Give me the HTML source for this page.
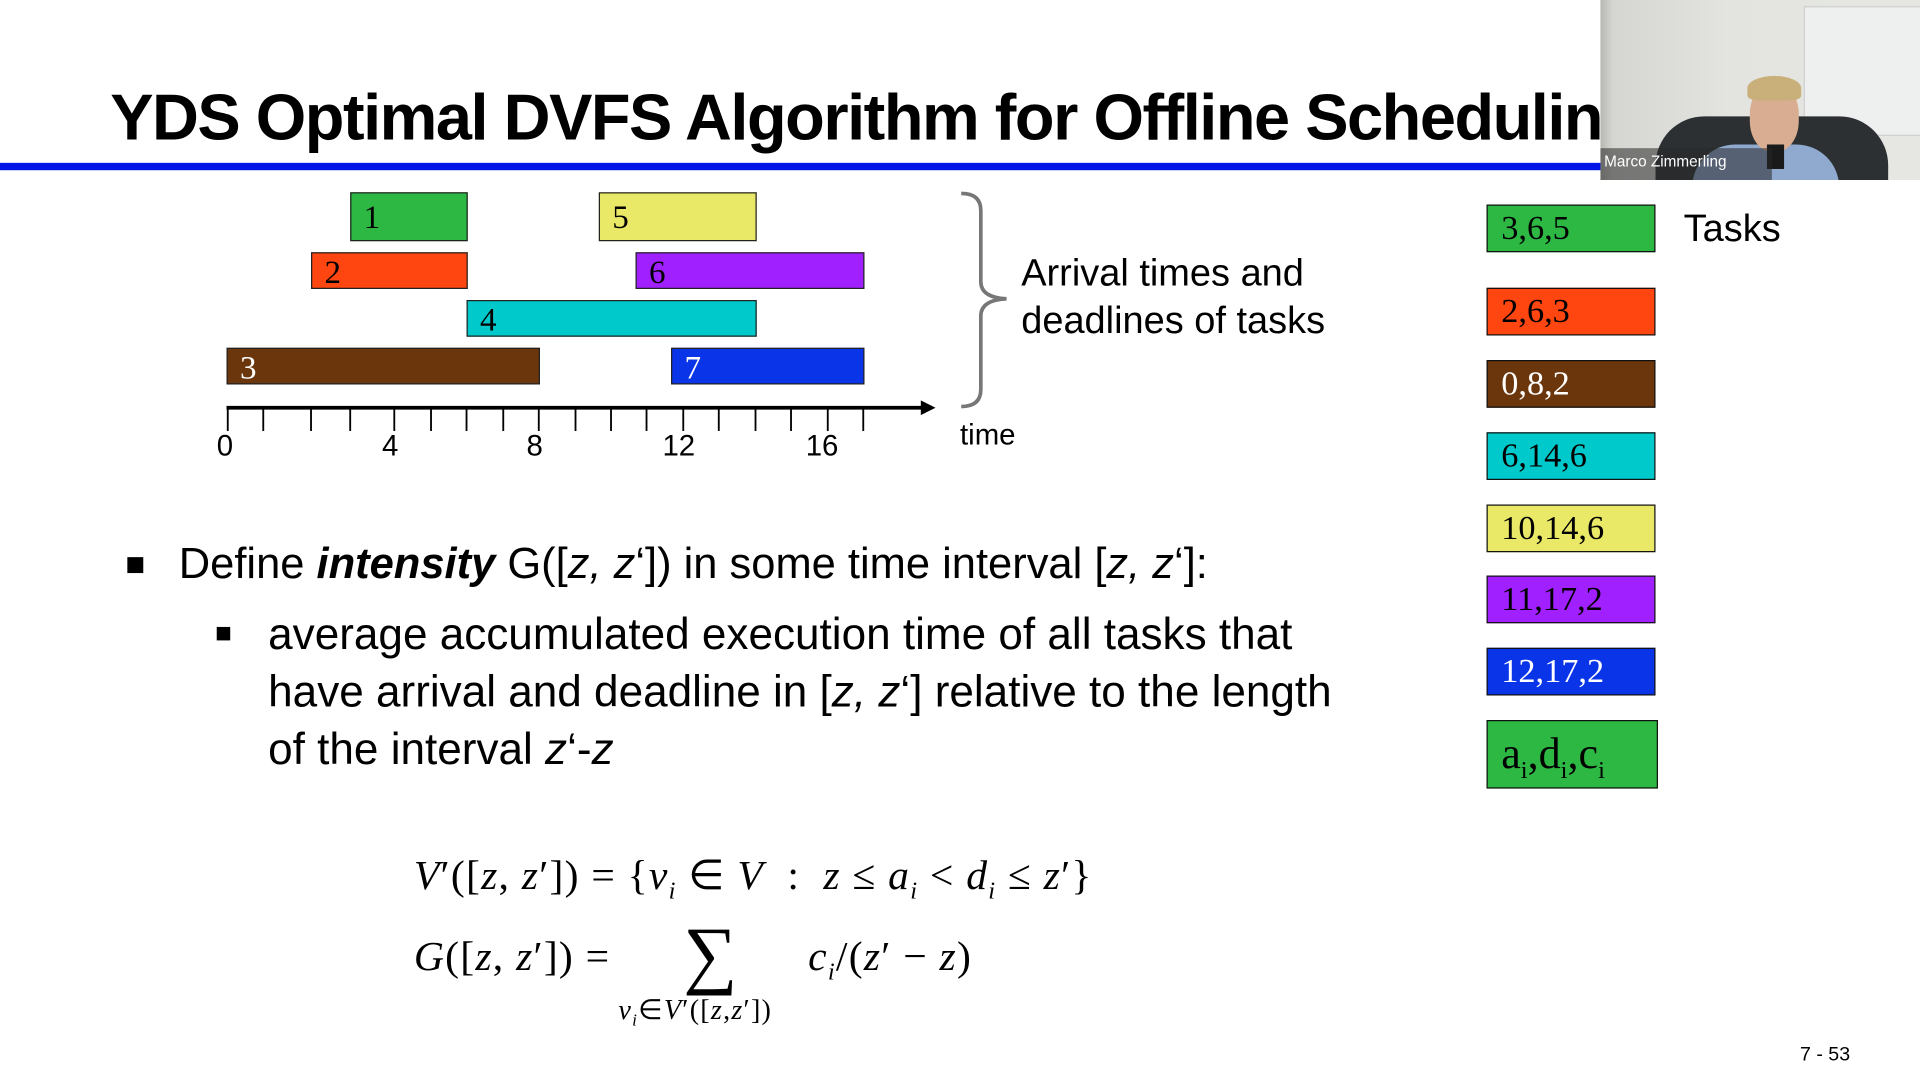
<!DOCTYPE html>
<html><head><meta charset="utf-8"><style>
html,body{margin:0;padding:0;width:1920px;height:1080px;overflow:hidden;background:#fff}
#s{position:absolute;left:0;top:0;width:1568px;height:882px;transform:scale(1.22449);transform-origin:0 0;font-family:"Liberation Sans",sans-serif;color:#000}
.a{position:absolute;white-space:nowrap}
.bar{position:absolute;border:1px solid #222;box-sizing:border-box;font-family:"Liberation Serif",serif;font-size:27px;line-height:1;padding:4px 0 0 10px}
.box{position:absolute;left:1214px;width:138px;height:39px;border:1px solid #111;box-sizing:border-box;font-family:"Liberation Serif",serif;font-size:28px;padding:4px 0 0 11px;line-height:1.1}
.m{font-family:"Liberation Serif",serif;font-size:34px;letter-spacing:1px}
.txt{font-size:36px}
</style></head><body><div id="s">
<div class="a" style="left:90px;top:66px;font-size:53px;font-weight:bold;letter-spacing:-1.2px">YDS Optimal DVFS Algorithm for Offline Scheduling</div>
<div class="a" style="left:0;top:133px;width:1310px;height:6px;background:#0016e6"></div>

<div class="bar" style="left:286px;top:157px;width:96px;height:40px;background:#2db843;padding-top:6px">1</div>
<div class="bar" style="left:489px;top:157px;width:129px;height:40px;background:#e9e867;padding-top:6px">5</div>
<div class="bar" style="left:254px;top:206px;width:128px;height:30px;background:#ff4510;padding-top:2px">2</div>
<div class="bar" style="left:519px;top:206px;width:187px;height:30px;background:#a020ff;padding-top:2px">6</div>
<div class="bar" style="left:381px;top:245px;width:237px;height:30px;background:#00c9cb;padding-top:2px;padding-left:10px">4</div>
<div class="bar" style="left:185px;top:284px;width:256px;height:30px;background:#6b360b;color:#fff;padding-top:2px">3</div>
<div class="bar" style="left:548px;top:284px;width:158px;height:30px;background:#0a34e8;color:#fff;padding-top:2px">7</div>

<svg class="a" style="left:0;top:0" width="1568" height="400">
<line x1="185" y1="333" x2="755" y2="333" stroke="#000" stroke-width="3"/>
<polygon points="764,333 752,327 752,339" fill="#000"/>
<g stroke="#000" stroke-width="1.5">
<line x1="186" y1="333" x2="186" y2="352"/><line x1="215" y1="333" x2="215" y2="352"/><line x1="254" y1="333" x2="254" y2="352"/><line x1="286" y1="333" x2="286" y2="352"/><line x1="322" y1="333" x2="322" y2="352"/><line x1="352" y1="333" x2="352" y2="352"/><line x1="381" y1="333" x2="381" y2="352"/><line x1="411" y1="333" x2="411" y2="352"/><line x1="440" y1="333" x2="440" y2="352"/><line x1="470" y1="333" x2="470" y2="352"/><line x1="499" y1="333" x2="499" y2="352"/><line x1="528" y1="333" x2="528" y2="352"/><line x1="558" y1="333" x2="558" y2="352"/><line x1="587" y1="333" x2="587" y2="352"/><line x1="617" y1="333" x2="617" y2="352"/><line x1="646" y1="333" x2="646" y2="352"/><line x1="676" y1="333" x2="676" y2="352"/><line x1="705" y1="333" x2="705" y2="352"/>
</g>
<path d="M785 158 Q801 158 801 172 L801 230 Q801 243 822 244 Q801 245 801 258 L801 318 Q801 332 785 332" fill="none" stroke="#777" stroke-width="3"/>
</svg>
<div class="a" style="left:177px;top:351px;font-size:24px">0</div>
<div class="a" style="left:312px;top:351px;font-size:24px">4</div>
<div class="a" style="left:430px;top:351px;font-size:24px">8</div>
<div class="a" style="left:541px;top:351px;font-size:24px">12</div>
<div class="a" style="left:658px;top:351px;font-size:24px">16</div>
<div class="a" style="left:784px;top:342px;font-size:24px">time</div>
<div class="a" style="left:834px;top:203px;font-size:31px;line-height:39px">Arrival times and<br>deadlines of tasks</div>

<div class="box" style="top:167px;background:#2db843">3,6,5</div>
<div class="a" style="left:1375px;top:169px;font-size:31px">Tasks</div>
<div class="box" style="top:235px;background:#ff4510">2,6,3</div>
<div class="box" style="top:294px;background:#6b360b;color:#fff">0,8,2</div>
<div class="box" style="top:353px;background:#00c9cb">6,14,6</div>
<div class="box" style="top:412px;background:#e9e867">10,14,6</div>
<div class="box" style="top:470px;background:#a020ff">11,17,2</div>
<div class="box" style="top:529px;background:#0a34e8;color:#fff">12,17,2</div>
<div class="box" style="top:588px;height:56px;width:140px;background:#2db843;font-size:36px;padding-top:7px">a<sub style="font-size:20px">i</sub>,d<sub style="font-size:20px">i</sub>,c<sub style="font-size:20px">i</sub></div>

<div class="a" style="left:104px;top:455px;width:13px;height:13px;background:#000"></div>
<div class="a" style="left:146px;top:440px;font-size:35.5px">Define <b><i>intensity</i></b> G([<i>z, z</i>‘]) in some time interval [<i>z, z</i>‘]:</div>
<div class="a" style="left:177px;top:512px;width:11px;height:11px;background:#000"></div>
<div class="a txt" style="left:219px;top:494px;line-height:47px">average accumulated execution time of all tasks that<br>have arrival and deadline in [<i>z, z</i>‘] relative to the length<br>of the interval <i>z</i>‘-<i>z</i></div>

<div class="a m" style="left:338px;top:695px"><i>V</i>′([<i>z</i>, <i>z</i>′]) = {<i>v<sub style="font-size:20px">i</sub></i> ∈ <i>V</i> &nbsp;: &nbsp;<i>z</i> ≤ <i>a<sub style="font-size:20px">i</sub></i> &lt; <i>d<sub style="font-size:20px">i</sub></i> ≤ <i>z</i>′}</div>
<div class="a m" style="left:338px;top:763px"><i>G</i>([<i>z</i>, <i>z</i>′]) =</div>
<div class="a" style="left:558px;top:745px;font-family:'Liberation Serif',serif;font-size:62px">∑</div>
<div class="a m" style="left:660px;top:763px"><i>c<sub style="font-size:20px">i</sub></i>/(<i>z</i>′ − <i>z</i>)</div>
<div class="a" style="left:505px;top:812px;font-family:'Liberation Serif',serif;font-size:23px;letter-spacing:1px"><i>v<sub style="font-size:14px">i</sub></i>∈<i>V</i>′([<i>z</i>,<i>z</i>′])</div>

<div class="a" style="left:1470px;top:853px;font-size:16px">7 - 53</div>

<div class="a" style="left:1307px;top:0;width:261px;height:147px;overflow:hidden;background:linear-gradient(90deg,#b8b8b3 0,#d5d6d2 4%,#e3e4e0 40%,#e6e7e3 100%)">
<div class="a" style="left:166px;top:5px;width:95px;height:104px;background:#eeefef;border:1px solid #cfcfcf"></div>
<div class="a" style="left:45px;top:95px;width:190px;height:70px;background:#2c3033;border-radius:40px 40px 0 0"></div>
<div class="a" style="left:75px;top:118px;width:120px;height:40px;background:#8fa9cf;border-radius:35px 35px 0 0"></div>
<div class="a" style="left:122px;top:68px;width:40px;height:56px;background:#d8ad92;border-radius:45%"></div>
<div class="a" style="left:120px;top:62px;width:44px;height:20px;background:#c9b07a;border-radius:50% 50% 20% 20%"></div>
<div class="a" style="left:136px;top:118px;width:14px;height:20px;background:#1a1a1a"></div>
<div class="a" style="left:0;top:121px;width:140px;height:26px;background:rgba(40,40,40,.55)"></div>
<div class="a" style="left:3px;top:125px;color:#fff;font-size:12.5px">Marco Zimmerling</div>
</div>
</div></body></html>
